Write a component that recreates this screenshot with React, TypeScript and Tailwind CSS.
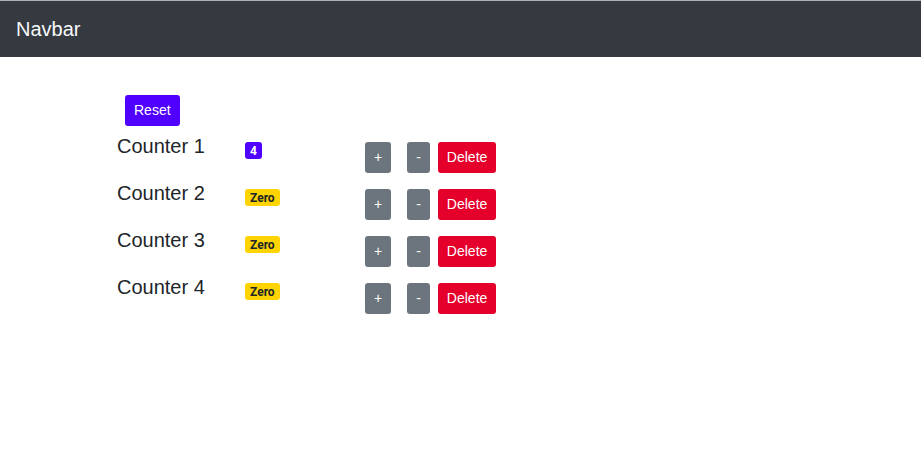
const counters = [
  { id: 1, value: 4 },
  { id: 2, value: 0 },
  { id: 3, value: 0 },
  { id: 4, value: 0 },
];

function CounterRow({ id, value }: { id: number; value: number }) {
  const isZero = value === 0;
  return (
    <div className="flex h-[47px] items-start">
      <span className="-mt-[1px] w-[128px] text-[20px] leading-[24px] text-[#212529]">Counter {id}</span>
      <div className="mt-[7px] flex w-[120px]">
        <span
          className={
            isZero
              ? "flex h-[17px] items-center rounded-[3px] bg-[#ffd400] px-[5px] font-['Roboto',sans-serif] text-[12px] font-bold text-[#212529]"
              : "flex h-[17px] items-center rounded-[3px] bg-[#5000ff] px-[5px] font-['Roboto',sans-serif] text-[12px] font-bold text-white"
          }
        >
          {isZero ? "Zero" : value}
        </span>
      </div>
      <div className="mt-[7px] flex">
        <button className="h-[31px] rounded-[3px] bg-[#6c757d] px-[9px] text-[14px] text-white">+</button>
        <button className="ml-[16px] h-[31px] rounded-[3px] bg-[#6c757d] px-[9px] text-[14px] text-white">-</button>
        <button className="ml-[8px] h-[31px] rounded-[3px] bg-[#e4002b] px-[9px] text-[14px] text-white">Delete</button>
      </div>
    </div>
  );
}

export default function App() {
  return (
    <div className="min-h-[475px] bg-white font-['Liberation_Sans',Arial,sans-serif]">
      <nav className="flex h-[57px] items-center border-t border-[#aeb0b3] bg-[#343a40] px-[16px]">
        <span className="text-[20px] text-[#f8f9fa]">Navbar</span>
      </nav>
      <main className="pl-[117px] pt-[38px]">
        <button className="ml-[8px] h-[31px] rounded-[3px] bg-[#5000ff] px-[9px] text-[14px] text-white">Reset</button>
        <div className="mt-[9px]">
          {counters.map((c) => (
            <CounterRow key={c.id} id={c.id} value={c.value} />
          ))}
        </div>
      </main>
    </div>
  );
}
